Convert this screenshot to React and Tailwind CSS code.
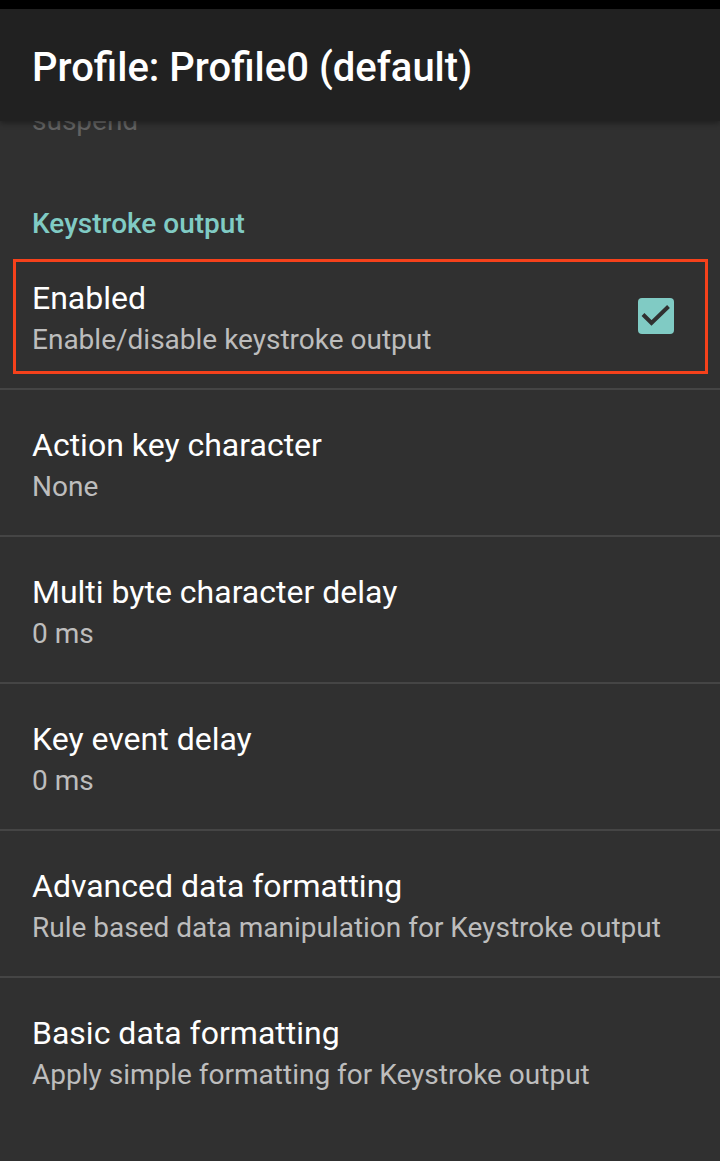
import React from "react";

const rows = [
  { title: "Action key character", summary: "None" },
  { title: "Multi byte character delay", summary: "0 ms" },
  { title: "Key event delay", summary: "0 ms" },
  { title: "Advanced data formatting", summary: "Rule based data manipulation for Keystroke output" },
  { title: "Basic data formatting", summary: "Apply simple formatting for Keystroke output" },
];

function CheckBox() {
  return (
    <svg width="36" height="36" viewBox="0 0 36 36" className="mb-[6px] shrink-0">
      <rect x="0" y="0" width="36" height="36" rx="4" fill="#80cbc4" />
      <polyline
        points="5,16.5 13.5,25 30.5,8.5"
        fill="none"
        stroke="#303030"
        strokeWidth="4"
      />
    </svg>
  );
}

function PrefText({ title, summary }) {
  return (
    <div className="flex min-w-0 flex-1 flex-col">
      <span className="text-[32px] leading-[40px] text-white">{title}</span>
      <span className="mt-[2px] text-[28px] leading-[40px] text-[#bdbdbd]">{summary}</span>
    </div>
  );
}

export default function App() {
  return (
    <div
      className="flex h-[1161px] w-[720px] flex-col overflow-hidden bg-[#303030]"
      style={{ fontFamily: "Roboto, 'Noto Sans', sans-serif" }}
    >
      <div className="h-[9px] shrink-0 bg-black" />
      <div className="relative z-10 h-[112px] shrink-0 bg-[#212121] pl-[32px] pt-[35px] shadow-[0_2px_6px_rgba(0,0,0,0.4)]">
        <h1 className="text-[40px] font-medium leading-[47px] text-white">
          Profile: Profile0 (default)
        </h1>
      </div>

      <div className="flex-1 overflow-hidden">
        <div className="-mt-[20px] pb-[27px] pl-[32px]">
          <span className="text-[28px] leading-[40px] text-[#626262]">suspend</span>
        </div>

        <div className="pl-[32px] pt-[36px]">
          <span className="text-[28px] font-medium leading-[40px] text-[#80cbc4]">
            Keystroke output
          </span>
        </div>

        <div className="relative flex items-center border-b-2 border-[#454545] pb-[28px] pl-[32px] pr-[46px] pt-[34px]">
          <PrefText title="Enabled" summary="Enable/disable keystroke output" />
          <CheckBox />
          <div className="pointer-events-none absolute bottom-[14px] left-[13px] right-[12px] top-[15px] border-[3px] border-[#f5411b]" />
        </div>

        {rows.map((row, i) => (
          <div
            key={row.title}
            className={`flex items-center pb-[28px] pl-[32px] pr-[46px] pt-[35px] ${
              i < rows.length - 1 ? "border-b-2 border-[#454545]" : ""
            }`}
          >
            <PrefText title={row.title} summary={row.summary} />
          </div>
        ))}
      </div>
    </div>
  );
}
